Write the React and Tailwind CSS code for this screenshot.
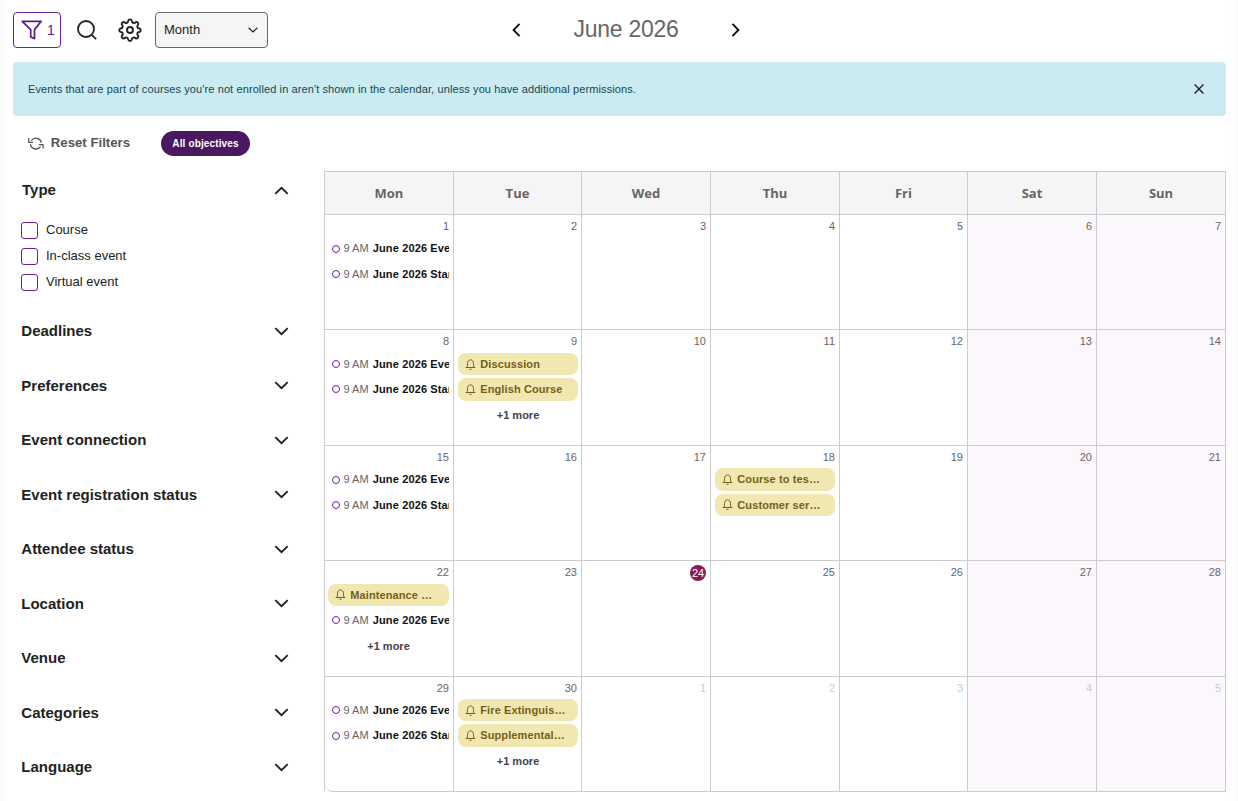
import { useState } from "react";

const WEEKDAYS = ["Mon", "Tue", "Wed", "Thu", "Fri", "Sat", "Sun"];

const TYPE_OPTIONS = ["Course", "In-class event", "Virtual event"];

const SECTIONS = [
  "Deadlines",
  "Preferences",
  "Event connection",
  "Event registration status",
  "Attendee status",
  "Location",
  "Venue",
  "Categories",
  "Language"
];

const session = (title) => ({ kind: "session", time: "9 AM", title });
const reminder = (title) => ({ kind: "reminder", title });

const recurring = [session("June 2026 Event"), session("June 2026 Start")];

const WEEKS = [
  { days: [1, 2, 3, 4, 5, 6, 7], offset: "pt-[22.4px]", events: { 1: recurring } },
  {
    days: [8, 9, 10, 11, 12, 13, 14],
    offset: "pt-[23px]",
    events: { 8: recurring, 9: [reminder("Discussion"), reminder("English Course")] },
    more: { 9: 1 }
  },
  {
    days: [15, 16, 17, 18, 19, 20, 21],
    offset: "pt-[22.4px]",
    events: { 15: recurring, 18: [reminder("Course to test events"), reminder("Customer service")] }
  },
  {
    days: [22, 23, 24, 25, 26, 27, 28],
    offset: "pt-[22.8px]",
    events: { 22: [reminder("Maintenance course"), recurring[0]] },
    more: { 22: 1 }
  },
  {
    days: [29, 30, 1, 2, 3, 4, 5],
    offset: "pt-[22.1px]",
    events: { 29: recurring, 30: [reminder("Fire Extinguisher"), reminder("Supplemental course")] },
    more: { 30: 1 }
  }
];

const TODAY = 24;

function FilterIcon() {
  return (
    <svg className="h-5 w-[22px]" viewBox="0 0 22 20" fill="none" stroke="currentColor" strokeWidth="1.7" strokeLinejoin="round">
      <path d="M1.2 1.3h19l-6.700 8.300v9l-3.800-1.600V9.600z" />
    </svg>
  );
}

function SearchIcon() {
  return (
    <svg className="h-5 w-5" viewBox="0 0 20 20" fill="none" stroke="currentColor" strokeWidth="1.8">
      <circle cx="9" cy="9" r="8" />
      <path d="M14.8 14.8l4.4 4.4" />
    </svg>
  );
}

function GearIcon() {
  return (
    <svg className="h-6 w-6" viewBox="0 0 24 24" fill="none" stroke="currentColor" strokeWidth="1.9" strokeLinejoin="round">
      <circle cx="12" cy="12" r="3" />
      <path d="M10.2 2.8a1.850 1.850 0 0 1 3.600 0l.3 1.100a1.8 1.8 0 0 0 2.5 1l.9-.5a1.8 1.8 0 0 1 2.500 2.500l-.5.9a1.8 1.8 0 0 0 1 2.5l1 .2a1.8 1.8 0 0 1 0 3.400l-1 .3a1.8 1.8 0 0 0-1 2.5l.5.9a1.8 1.8 0 0 1-2.500 2.500l-.9-.5a1.8 1.8 0 0 0-2.5 1l-.3 1a1.850 1.850 0 0 1-3.600 0l-.3-1a1.8 1.8 0 0 0-2.5-1l-.9.5a1.8 1.8 0 0 1-2.500-2.500l.5-.9a1.8 1.8 0 0 0-1-2.5l-1-.3a1.8 1.8 0 0 1 0-3.400l1-.2a1.8 1.8 0 0 0 1-2.5l-.5-.9a1.8 1.8 0 0 1 2.500-2.500l.9.5a1.8 1.8 0 0 0 2.5-1z" />
    </svg>
  );
}

function ResetIcon() {
  return (
    <svg className="h-[15px] w-4" viewBox="0 0 16 15" fill="none" stroke="currentColor" strokeWidth="1.3">
      <path d="M3.4 4.6A5.7 5.7 0 0 1 13.6 6.6M12.7 10.6A5.7 5.7 0 0 1 2.4 8.2" />
      <path d="M.8 2.2v4.2h4.2M15.2 12.6V8.6H11" />
    </svg>
  );
}

function BellIcon() {
  return (
    <svg className="h-[11px] w-[11px] shrink-0" viewBox="0 0 11 11" fill="none" stroke="currentColor" strokeWidth="1">
      <path d="M.7 8.500h9.6M1.700 8.400c.7-.8.8-1.800.8-3.700C2.500 2.400 3.700.9 5.500.9s3 1.500 3 3.800c0 1.900.1 2.900.8 3.700" />
      <path d="M4.500 10.300h2" />
    </svg>
  );
}

function Chevron({ up }) {
  return (
    <svg className={`h-[9px] w-[15px] ${up ? "rotate-180" : ""}`} viewBox="0 0 15 9" fill="none" stroke="currentColor" strokeWidth="1.900">
      <path d="M1.300 1.100l6.200 6 6.200-6" />
    </svg>
  );
}

function Toolbar() {
  return (
    <header className="flex h-[36px] items-center text-[#222]">
      <button type="button" className="flex h-9 w-12 items-center gap-[4px] rounded-[4px] border border-[#6c1f9c] pl-[7px] text-[14px] text-[#5c1a87]">
        <FilterIcon />
        <span>1</span>
      </button>
      <button type="button" aria-label="Search" className="ml-4">
        <SearchIcon />
      </button>
      <button type="button" aria-label="Settings" className="ml-[21px]">
        <GearIcon />
      </button>
      <button type="button" className="ml-[13px] flex h-9 w-[113px] items-center justify-between rounded-[4px] border border-[#666] bg-[#f5f5f5] pr-[9px] pl-2 text-[13px]">
        <span>Month</span>
        <svg className="h-[6px] w-[10px]" viewBox="0 0 10 6" fill="none" stroke="currentColor" strokeWidth="1.2">
          <path d="M.6.700l4.400 4.300L9.400.700" />
        </svg>
      </button>
      <div className="ml-[244px] flex items-center">
        <button type="button" aria-label="Previous month">
          <svg className="h-[14px] w-[9px]" viewBox="0 0 9 14" fill="none" stroke="#111" strokeWidth="1.900">
            <path d="M7.500.900L1.600 7l5.900 6.100" />
          </svg>
        </button>
        <h1 className="w-[210px] pb-[2px] text-center text-[23px] leading-7 tracking-[-0.25px] text-[#666]">June 2026</h1>
        <button type="button" aria-label="Next month">
          <svg className="h-[14px] w-[9px]" viewBox="0 0 9 14" fill="none" stroke="#111" strokeWidth="1.900">
            <path d="M1.500.900L7.400 7l-5.900 6.100" />
          </svg>
        </button>
      </div>
    </header>
  );
}

function Sidebar() {
  const [checked, setChecked] = useState([]);

  function toggle(option) {
    setChecked((current) =>
      current.includes(option) ? current.filter((item) => item !== option) : [...current, option]
    );
  }

  return (
    <aside className="w-[311px] shrink-0 pl-[8px] text-[#222]">
      <button type="button" className="flex h-[38px] w-[268px] items-center justify-between text-[15px] font-bold">
        <span className="pl-px">Type</span>
        <Chevron up />
      </button>
      <div className="mt-[8px]">
        {TYPE_OPTIONS.map((option) => (
          <label key={option} className="flex h-[26px] items-center text-[13px]">
            <input
              type="checkbox"
              checked={checked.includes(option)}
              onChange={() => toggle(option)}
              className="h-[17px] w-[17px] appearance-none rounded-[3px] border border-[#6c1f9c] bg-white checked:bg-[#6c1f9c]"
            />
            <span className="pl-2">{option}</span>
          </label>
        ))}
      </div>
      <div className="mt-[9px]">
        {SECTIONS.map((section) => (
          <button
            key={section}
            type="button"
            className="flex h-[54.5px] w-[268px] items-center justify-between text-[15px] font-bold"
          >
            <span className="pl-[0.3px]">{section}</span>
            <Chevron />
          </button>
        ))}
      </div>
    </aside>
  );
}

function CalendarEvent({ event }) {
  if (event.kind === "reminder") {
    return (
      <div className="mb-[2.9px] flex h-[22.4px] items-center gap-1 rounded-[8px] bg-[#f1e7b0] pr-[12.5px] pl-[7.3px] text-[11px] font-bold text-[#775f17]">
        <BellIcon />
        <span className="truncate tracking-[0.1px]">{event.title}</span>
      </div>
    );
  }

  return (
    <div className="mb-[2.9px] flex h-[22.4px] items-center overflow-hidden pl-1 text-[11px] whitespace-nowrap">
      <span className="mr-[3.5px] h-2 w-2 shrink-0 rounded-full border-[1.5px] border-[#6c1f9c]" />
      <span className="mr-[4.2px] text-[#666]">{event.time}</span>
      <span className="font-bold tracking-[0.13px] text-[#111]">{event.title}</span>
    </div>
  );
}

function DayCell({ day, column, offset, events = [], more, outside }) {
  const isToday = day === TODAY;

  return (
    <div className={`relative min-w-0 border-r border-[#ccc] pr-1 pl-[4px] first:pl-[3px] nth-2:pr-[3px] ${offset} ${column > 4 ? "bg-[#fbf7fd]" : ""}`}>
      {isToday ? (
        <span className="absolute top-1 right-[4px] flex h-4 w-4 items-center justify-center rounded-full bg-[#8b1a56] text-[11px] text-white">
          {day}
        </span>
      ) : (
        <span className={`absolute top-[3px] right-[4px] text-[11px] leading-4 ${outside ? "text-[#ccc]" : "text-[#666]"}`}>
          {day}
        </span>
      )}
      {events.map((event, index) => (
        <CalendarEvent key={index} event={event} />
      ))}
      {more ? (
        <button type="button" className="mt-[3.5px] flex h-[22px] w-full items-center justify-center text-[11px] font-bold text-[#444]">
          +{more} more
        </button>
      ) : null}
    </div>
  );
}

function Calendar() {
  return (
    <section className="w-[902px] shrink-0 self-start border-t border-l border-[#ccc]">
      <div className="grid h-[43px] grid-cols-[129px_128px_129px_129px_128px_129px_129px] border-b border-[#ccc] bg-[#f5f5f5]">
        {WEEKDAYS.map((weekday) => (
          <div
            key={weekday}
            className="flex items-center justify-center border-r border-[#ccc] pt-[2px] font-['Open_Sans',sans-serif] text-[13px] font-bold text-[#666]"
          >
            {weekday}
          </div>
        ))}
      </div>
      <div className="grid grid-rows-[115px_116px_115px_116px_115px]">
        {WEEKS.map((week, row) => (
          <div
            key={row}
            className="grid grid-cols-[129px_128px_129px_129px_128px_129px_129px] border-b border-[#ccc] last:rounded-bl-[8px]"
          >
            {week.days.map((day, column) => {
              const outside = row === 4 && day < 10;

              return (
                <DayCell
                  key={column}
                  day={day}
                  column={column}
                  offset={week.offset}
                  outside={outside}
                  events={week.events[day]}
                  more={week.more?.[day]}
                />
              );
            })}
          </div>
        ))}
      </div>
    </section>
  );
}

function App() {
  return (
    <main className="h-[801px] overflow-hidden bg-[linear-gradient(to_right,#fafafa,#fff_7px,#fff_calc(100%-9px),#fafafa)] px-[13px] pt-3 font-['Liberation_Sans',Arial,sans-serif]">
      <Toolbar />
      <div className="mt-[14px] flex h-[54px] w-[1213px] items-center justify-between rounded-[4px] bg-[#caebf1] pr-[22px] pl-[15px] text-[11px] text-[#164650]">
        <p className="tracking-[0.106px]">
          Events that are part of courses you're not enrolled in aren't shown in the calendar, unless you have additional permissions.
        </p>
        <button type="button" aria-label="Dismiss" className="text-[#222]">
          <svg className="h-[10px] w-[10px]" viewBox="0 0 10 10" fill="none" stroke="currentColor" strokeWidth="1.4">
            <path d="M.6.6l8.800 8.800M9.400.6L.6 9.400" />
          </svg>
        </button>
      </div>
      <div className="flex h-[55px] items-center pl-[15px]">
        <button type="button" className="flex w-[102px] items-center gap-[7px] text-[13.2px] font-bold whitespace-nowrap text-[#555]">
          <ResetIcon />
          <span className="pb-px">Reset Filters</span>
        </button>
        <span className="ml-[31px] flex h-[25px] w-[89px] items-center justify-center rounded-full bg-[#49185f] text-[10px] font-bold tracking-[0.13px] text-white">
          All objectives
        </span>
      </div>
      <div className="flex">
        <Sidebar />
        <Calendar />
      </div>
    </main>
  );
}

export default App;
